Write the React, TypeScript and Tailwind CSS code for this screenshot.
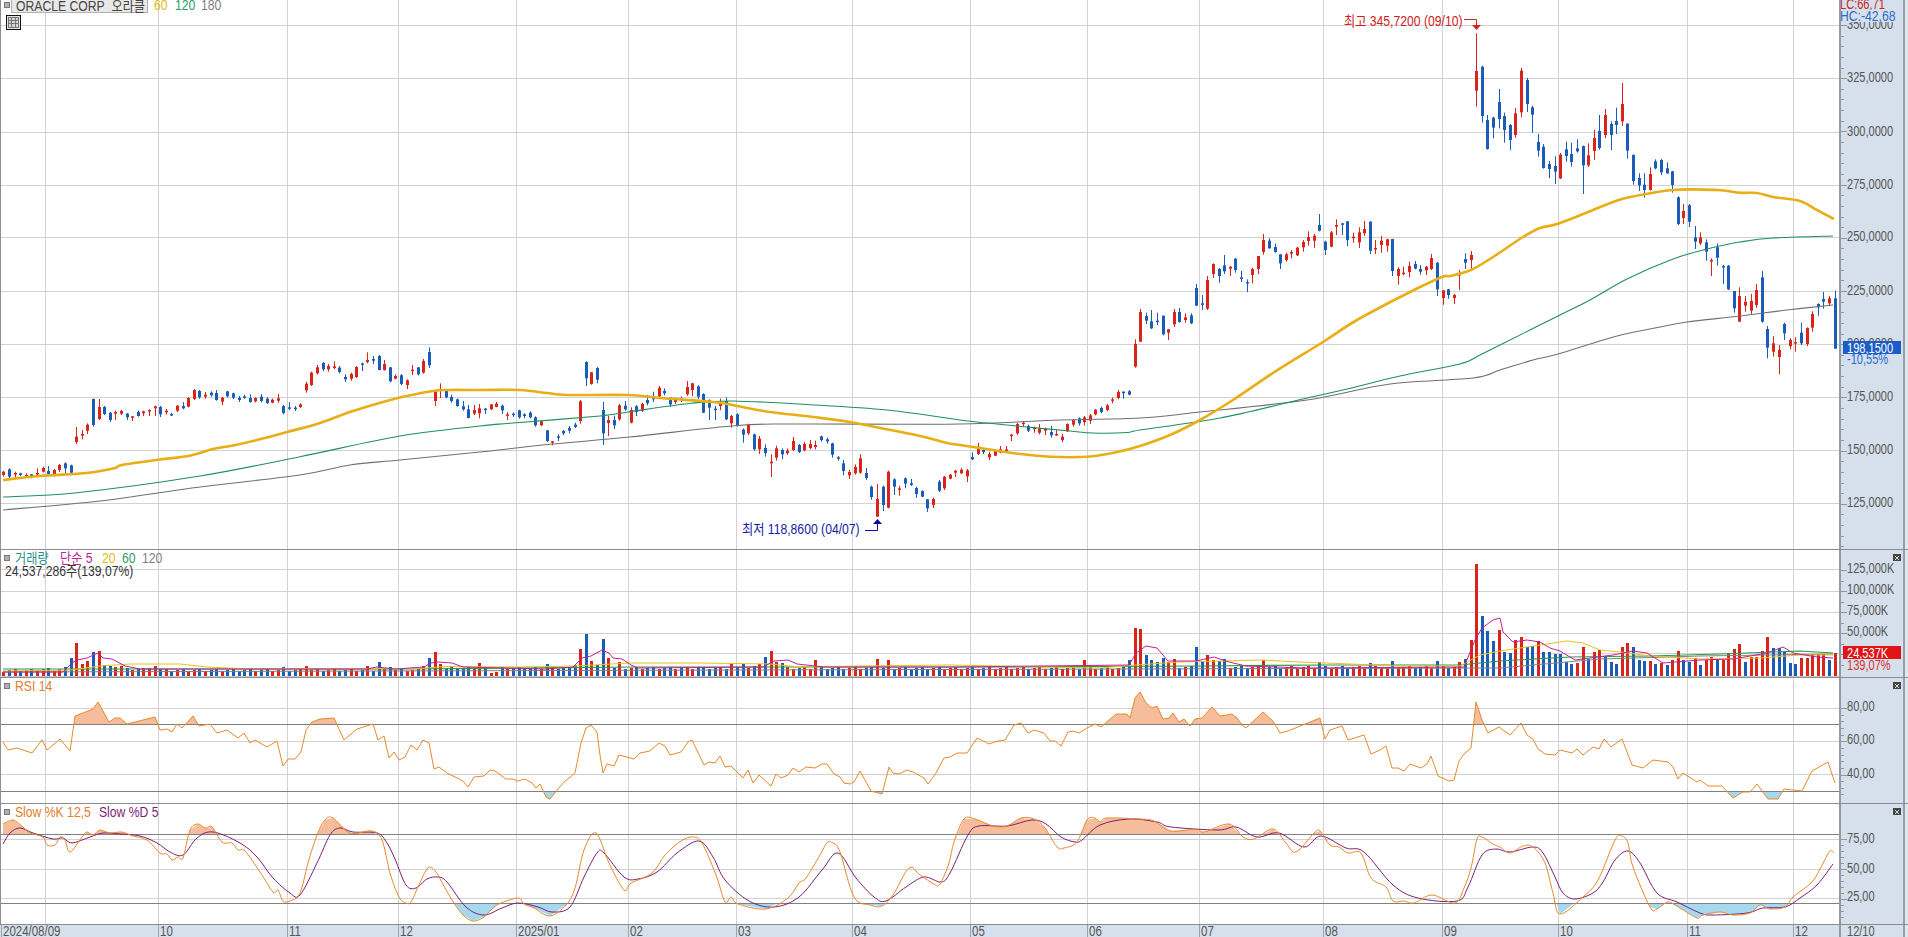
import React from "react";

const parseGroup = (y0: number, s: string) =>
  s.trim().split(/\s+/).map((t) => {
    const [h, a, b, l] = t.slice(1).split(",").map(Number);
    return { c: t[0], h: y0 + h / 3, t: y0 + a / 3, b: y0 + b / 3, l: y0 + l / 3 };
  });

const candles = [
  ...parseGroup(320, `r453,455,465,470 b445,448,470,474 r455,459,463,473 b458,460,465,468 r460,465,470,473 b462,463,471,475 r445,459,462,467 r440,444,455,458 b438,453,462,465 r447,450,468,470 r432,435,450,456 b427,430,445,460 b434,436,458,462 r321,350,366,372 r330,342,347,358 r310,314,332,342 b236,237,315,320 r237,261,297,300 b258,261,282,285 b276,278,300,306 r272,276,281,300 r270,273,281,285 b279,281,292,300 r288,289,291,303 b271,276,288,290 r272,274,280,288 r268,270,274,288 r257,259,265,288 b258,261,283,291 r267,272,277,284 b278,282,284,288 r255,257,272,276 b246,258,265,268 r231,234,260,262 r207,210,237,240 b210,213,232,236 r216,224,230,236 b214,218,226,230 b210,219,240,242 r231,233,245,255 b213,214,229,232 b218,220,233,237 b228,234,240,246 b224,229,233,237 b223,234,246,248 r232,234,244,247 b222,230,243,247 b232,236,249,252 r236,239,248,250 r222,235,242,248 b255,258,279,283 b246,262,264,270 b258,263,267,273 r250,253,261,264 r185,191,211,218 r155,158,195,198 r135,142,160,163 b126,129,148,153 r132,138,148,155 r124,139,144,148 b138,143,156,160 b163,171,178,186 r158,162,176,182 r138,141,171,174 b128,130,131,153 r97,120,126,130 b108,117,122,132 b105,108,150,151 r120,132,150,152 b141,142,184,187 r163,168,176,178 b162,166,192,196 r178,181,195,207 r135,149,151,165 b141,142,163,166 r117,123,158,161 b82,96,136,144 r212,214,243,258 r190,208,212,234 b209,212,232,235 b224,231,243,248 b236,238,258,260 b243,259,268,272 b255,268,294,295 r255,270,281,285 r252,265,280,295
  b264,266,270,282 r252,253,268,270 r246,251,261,262 b254,257,271,282 r277,283,287,300 b278,281,285,291 b269,271,292,296 b280,283,288,295 b274,278,292,295 b289,292,316,320 r302,304,316,318 b330,331,363,366 r363,364,368,376 b343,349,351,363 b330,333,340,345 b318,324,332,340 b308,314,321,324 r240,244,303,311 b124,126,175,198 r156,157,192,194 b141,144,179,190 b246,270,340,375 r288,300,309,348 b287,300,316,327 r252,256,298,302 b243,257,268,272 r262,270,308,310 b255,259,276,288 r248,252,272,276 b225,240,250,256 b215,231,238,246 r198,203,229,236 b205,213,220,226 b232,233,253,261 r233,236,246,252 b230,236,238,246 r183,201,223,227 r188,190,210,228 b196,199,230,237 b220,222,278,279 b238,241,263,300 b258,266,270,300 r236,248,258,270 b232,243,298,300 r285,288,310,323 b280,283,317,320 b325,329,344,368 r311,314,340,345 b341,343,388,392 r348,356,388,402 b373,384,399,410 r403,425,430,471 r377,385,413,422 b385,390,403,418 r385,392,400,404 r351,363,390,393 b372,375,396,399 r366,372,391,394 r360,372,384,388 r362,375,381,388 b347,349,360,365 b353,358,364,371 b368,370,404,413 b408,412,416,422 b420,430,453,466 r450,456,466,477 r433,441,460,464 r403,415,458,461 b444,459,474,480 b497,500,531,539 r492,537,590,590 b497,500,555,573 r452,455,563,565 b475,478,500,525 r498,505,507,527 b472,475,491,505 b477,490,495,498 b500,504,522,534 b511,513,530,532 b537,538,565,576 r533,537,555,564 b480,485,512,516 r468,470,505,510 r462,464,476,478 r450,452,458,471 r445,449,460,462 r447,451,469,486 b397,411,418,420 r369,380,402,405`),
  ...parseGroup(390, `b175,180,186,192 r185,192,202,210 r178,182,197,198 r168,178,188,190 r168,178,181,188 r132,134,138,153 r98,102,130,135 r93,98,102,110 b104,108,122,126 r110,113,116,128 r102,116,128,133 r113,116,122,135 b108,126,136,143 r120,132,136,138 r132,140,150,156 r100,102,124,126 r87,90,104,110 b82,85,100,107 r78,82,96,106 r72,76,92,102 r57,59,73,76 b50,54,66,70 r42,46,60,64 r22,28,30,40 r0,6,24,28 b4,5,5,26 b0,4,14,16`),
  ...parseGroup(200, `r418,432,500,503 r327,336,425,426 b338,348,362,372 b330,364,385,387 b338,362,364,375 b347,347,403,406 r387,388,398,420 r327,336,373,381 b324,336,366,368 r340,352,360,368 b340,346,370,372 b252,264,317,318 b285,310,314,330 r228,240,326,330 r190,192,222,234 b204,207,228,248 b165,196,214,222 r198,200,206,228 b174,176,210,218 b213,232,236,246 b238,246,248,276 r203,207,225,250 r168,168,207,222 r102,120,156,164 b115,122,145,146 b131,141,156,158 b162,163,190,207 r158,163,180,185 r150,156,161,175 r140,143,166,168 r120,126,142,155 r94,111,123,137 r102,107,122,144 b42,75,92,94 b122,125,150,165 r93,97,140,142 r58,75,80,105 b69,70,72,105 b63,64,120,138 r98,110,113,128 r82,97,127,144 r63,87,100,108 b64,65,152,162 r120,144,147,162 r108,122,135,158 r116,118,137,155 b117,117,213,228 r202,207,228,254 r200,218,222,226 r185,198,216,232 b183,192,206,208 b195,207,215,224 r198,200,211,225 r162,174,207,210 b186,188,268,288 r270,271,294,314 b267,268,285,296 r283,284,294,312 r210,222,224,270 b160,177,188,207 r153,165,180,212`),
  ...parseGroup(0, `r100,213,272,320 b197,200,348,368 b345,360,447,449 b350,353,383,415 b267,306,357,385 b338,348,390,428 b372,375,420,450 r324,340,405,413 r204,212,337,352 b234,240,312,336 b317,322,344,398 b402,426,452,470 b432,440,504,506 b483,492,507,534 b469,498,515,552 r459,464,535,537 b425,448,468,485 b428,462,486,500 b418,445,454,458 b437,438,496,582 r430,466,496,501 r390,414,453,480 b345,393,444,449 r327,345,405,414 b364,372,405,450 b323,363,375,402 r249,312,364,378 b370,371,452,476 b463,465,543,554 b520,534,556,573 b520,554,570,593 r502,522,570,572 b478,484,505,508 b477,480,517,525 b487,505,520,522 b513,514,555,578 b589,592,672,675 r612,633,654,672 b612,616,665,681 b678,712,725,747 r697,712,730,735 b718,727,755,782 r775,780,783,828 b730,742,773,797 b795,798,800,852`),
  ...parseGroup(270, `b-15,-13,58,60 b63,63,115,128 r52,78,155,155 r78,95,107,125 r72,93,122,133 r42,60,105,113 b3,22,155,158 b168,177,233,265 r198,220,245,260 r225,240,261,313 b158,162,190,210 r205,210,228,238 r202,216,220,245 b158,188,220,225 r172,174,222,228 r124,132,173,185 b100,102,112,137 b66,87,95,116 r78,85,100,107 b62,85,236,236`),
];

const cx = (i: number) => Math.round(3.4 + 5.6 * i);
const RED = "#d8241b";
const BLUE = "#1b5cb8";

const volOver: Record<number, number> = {
  0: 672, 7: 669, 8: 668, 10: 669, 11: 667, 12: 658, 13: 643, 14: 664, 15: 661, 16: 652, 17: 651, 18: 665, 19: 666, 20: 667, 21: 666, 22: 668, 23: 670, 24: 669, 25: 668, 26: 668, 27: 666, 28: 669, 50: 667, 54: 666, 65: 666, 67: 662, 69: 667,
  75: 666, 76: 658, 77: 652, 78: 664, 85: 663, 87: 673, 88: 672, 97: 664, 102: 665, 103: 649, 104: 634, 105: 661, 106: 665, 107: 639, 108: 658, 110: 662, 130: 664, 132: 664, 134: 666, 135: 664, 136: 657, 137: 651, 138: 662, 139: 663, 145: 660, 156: 659, 158: 660,
  193: 660, 201: 660, 202: 628, 203: 629, 204: 655, 205: 660, 206: 662, 207: 658, 208: 662, 209: 659, 213: 647, 214: 661, 215: 655, 216: 660, 217: 661, 218: 659, 225: 660, 235: 662, 244: 663, 248: 661, 256: 661, 260: 662, 261: 659, 262: 640, 263: 564, 264: 616, 265: 631, 266: 641,
  267: 630, 268: 652, 269: 653, 270: 640, 271: 637, 272: 647, 273: 646, 274: 641, 275: 652, 276: 652, 277: 654, 278: 654, 279: 662, 280: 664, 281: 663, 282: 647, 283: 659, 284: 652, 285: 650, 286: 657, 287: 662, 288: 664, 289: 647, 290: 643, 291: 647, 292: 660, 293: 661, 294: 661, 295: 664, 296: 663, 297: 665, 298: 660, 299: 651, 300: 660, 301: 662, 302: 658, 303: 665, 304: 660, 305: 657, 306: 660, 307: 660, 308: 653, 309: 649, 310: 644, 311: 662, 312: 657, 313: 657, 314: 651, 315: 637, 316: 648, 317: 648, 318: 652, 319: 663, 320: 664, 321: 658, 322: 658, 323: 654, 324: 654, 325: 654, 326: 660, 327: 653,
};
const volColors = "rbbrrbbrbbbbbbrrbrrbbbrrbbbrbrbrrbbrbrrbrrrrbrrrrbbbbbrrrrrbr";

const gold = "3,480 40,476 87,473 115,468 122,465 160,459.5 188,456 213,449 233,445.5 257,440 287,432 317,424 353,411 400,397.5 433,391 447,390 480,390 520,390 547,393 567,395 628,395 660,398 713,402 737,406 770,412 813,417 850,422 880,428 920,436 947,443 960,445 993,450 1017,453.7 1050,456.7 1087,456.7 1117,452 1140,446 1170,435 1200,420 1233,400 1273,373 1323,342 1357,320 1410,292 1442,277 1450,276 1471,270 1493,257 1523,237 1540,228 1557,224 1593,210 1613,202 1630,197 1673,190 1717,190 1740,192.7 1757,193 1773,197 1800,201 1817,210 1834,219";
const green = "3,497 77,492.7 200,476 300,456.7 400,436 480,426 513,423 600,416 628,412 693,403 733,401 807,404.5 887,410 960,420 987,423 1027,427 1070,431 1093,433 1127,432.5 1140,430 1220,418 1307,398 1347,389 1400,376 1460,364 1480,355 1500,345 1558,316 1590,300 1627,279 1673,259 1707,249 1740,242 1773,238 1833,236";
const gray = "3,510 100,501 200,487 300,475 350,465 400,460 480,452 553,444 630,437 737,425.5 800,424 960,424 1060,420 1140,418 1200,412 1307,400 1390,384 1473,378 1500,370 1533,360 1558,354 1617,336 1660,327 1687,322 1740,316 1787,310 1833,305";

const volPink = "3,672 63,672 72,663 77,660 87,658 98,653 103,658 112,659 125,666 140,669 367,669 377,667 395,669 424,667 431,663 438,662 452,663 463,667 545,669 573,667 582,658 591,656 602,650 609,653 613,658 622,659 631,665 638,668 763,667 774,661 788,660 797,664 824,667 955,667 1129,665 1136,653 1146,646 1157,648 1168,661 1196,661 1214,657 1229,662 1246,666 1307,668 1464,667 1475,640 1482,628 1493,620 1500,618 1503,632 1513,642 1527,640 1540,642 1550,648 1560,651 1575,660 1597,657 1613,655 1633,651 1647,653 1663,663 1675,662 1700,660 1733,659 1767,653 1783,647 1793,653 1817,657 1833,658";
const volGold = "3,671 70,670 100,666 130,664 180,664 207,667 240,668.5 420,668.5 445,666.5 520,667 575,666 630,663 700,663 770,664 800,667 860,666 950,665 1100,668 1135,665 1180,662 1260,660 1300,662 1400,666 1460,666 1480,655 1500,651 1560,642 1567,641 1583,643 1600,650 1620,652 1650,656 1700,659 1760,658 1800,655 1833,655";
const volGreen = "3,669 400,669 640,667 1000,667 1200,666 1330,665 1460,665 1500,661 1570,657 1650,656 1720,654 1800,651 1833,653";
const volGray = "3,672 1500,668 1600,659 1700,656 1833,654";

const rsi = "3,742 8,750 17,748 32,753 42,740 47,750 60,739 70,751 75,716 83,713 93,709 98,702 109,722 115,718 120,718 127,724 155,717 160,730 167,729 172,732 177,724 182,728 193,716 199,726 210,724 217,733 227,730 238,738 244,733 250,743 255,740 267,747 277,741 283,766 288,759 295,759 301,752 306,730 312,722 320,719 334,718 344,740 357,729 373,724 378,740 384,736 389,758 394,752 399,760 405,757 411,745 417,750 423,740 429,743 434,769 439,767 447,773 463,781 468,787 474,777 484,776 490,770 495,771 506,779 513,779 518,781 525,779 532,783 536,788 540,784 546,797 550,799 563,783 575,773 581,743 586,728 591,725 597,732 600,755 603,773 607,764 614,766 619,755 634,759 640,753 650,751 659,743 665,746 670,755 681,752 688,742 692,740 704,765 709,762 715,763 720,756 725,767 731,766 743,778 748,770 753,783 759,775 771,786 776,774 781,778 788,775 793,768 799,772 806,767 815,768 822,764 827,764 834,774 840,777 844,783 850,784 854,782 860,771 871,791 882,794 889,767 893,773 899,774 907,770 913,772 924,778 928,784 936,773 944,758 950,757 957,753 967,753 977,738 989,744 998,741 1005,740 1014,725 1021,723 1028,733 1034,730 1044,733 1050,741 1055,741 1061,746 1068,732 1073,731 1079,733 1087,728 1095,724 1101,727 1116,714 1127,714 1130,718 1135,698 1140,692 1146,703 1152,708 1157,706 1163,719 1169,718 1173,713 1179,722 1184,719 1190,726 1195,719 1202,718 1212,707 1220,716 1227,715 1232,714 1237,718 1243,726 1246,728 1263,712 1273,721 1280,733 1288,731 1320,718 1325,739 1330,730 1342,726 1348,740 1364,735 1371,754 1380,750 1386,746 1392,768 1398,768 1404,771 1410,764 1421,768 1427,764 1431,756 1438,776 1449,781 1454,780 1459,761 1464,754 1471,748 1473,730 1476,702 1482,720 1488,733 1499,727 1510,735 1521,723 1527,735 1533,739 1538,749 1545,754 1555,755 1560,750 1572,753 1577,749 1583,755 1593,747 1599,749 1604,739 1611,747 1622,739 1632,765 1643,768 1653,760 1668,762 1673,767 1678,779 1683,773 1697,782 1700,780 1708,786 1722,786 1733,798 1743,792 1750,792 1757,784 1768,799 1778,799 1784,789 1802,791 1812,771 1828,762 1835,783";

const stochK = "3,824 13,820 23,827 30,833 43,837 47,845 55,845 60,837 65,840 70,852 82,837 87,832 93,835 100,830 110,833 122,832 133,836 147,840 160,853 167,854 172,860 178,857 183,858 190,830 198,824 205,828 212,827 222,842 232,843 238,850 245,851 260,872 273,892 278,890 283,901 290,901 300,893 308,863 317,835 325,820 333,818 350,833 372,831 382,840 390,873 399,897 406,903 411,902 418,887 428,868 436,872 445,888 454,903 463,915 473,921 484,917 497,905 518,898 524,904 534,908 550,916 566,905 575,888 584,850 596,833 609,863 624,890 631,883 652,873 665,855 681,841 693,837 702,843 716,875 725,902 731,897 738,904 766,909 788,898 799,883 806,878 820,855 827,843 833,843 840,852 854,897 870,905 882,906 893,895 909,868 920,875 934,884 940,884 949,863 954,842 964,819 975,819 993,826 1007,826 1021,818 1034,819 1045,828 1057,847 1064,848 1077,842 1087,820 1095,818 1100,822 1107,818 1139,819 1154,821 1171,831 1196,829 1204,832 1229,824 1243,837 1254,839 1273,829 1286,843 1296,852 1314,833 1320,831 1330,845 1339,847 1348,853 1361,853 1371,878 1386,887 1393,901 1404,901 1414,903 1432,895 1455,903 1464,888 1471,868 1477,839 1482,837 1493,844 1500,847 1510,853 1523,846 1533,847 1545,863 1553,893 1560,914 1583,897 1598,880 1615,840 1622,836 1628,843 1633,867 1650,907 1657,909 1668,902 1680,908 1697,918 1703,915 1720,912 1733,915 1750,913 1760,905 1770,909 1785,907 1793,897 1812,882 1822,865 1830,851 1834,853";
const stochD = "3,844 10,833 20,828 33,833 53,839 63,838 72,843 90,837 103,833 120,834 140,836 157,843 170,852 183,855 197,838 213,832 240,843 257,857 273,878 290,893 300,895 317,863 330,835 340,828 353,832 377,833 387,843 395,859 406,885 416,888 427,879 438,877 447,882 466,907 484,915 502,908 518,903 538,907 552,912 570,907 584,877 597,853 604,853 624,877 638,879 657,872 677,853 699,841 713,857 725,880 749,901 774,907 799,897 822,870 838,853 856,878 874,897 886,901 906,887 924,877 941,882 950,873 968,835 979,826 1007,826 1032,820 1046,824 1061,837 1075,842 1082,840 1100,825 1129,819 1157,822 1171,827 1218,830 1236,827 1257,837 1279,833 1304,847 1321,836 1346,848 1364,852 1393,885 1418,898 1457,901 1468,887 1482,855 1496,849 1510,852 1533,847 1543,853 1555,877 1563,893 1575,899 1593,893 1603,882 1615,860 1628,851 1640,863 1657,893 1677,902 1700,913 1713,915 1747,913 1763,908 1785,907 1800,898 1817,885 1833,864";

const vGrid = [45, 158, 287, 398, 516, 628, 736, 852, 970, 1087, 1199, 1323, 1442, 1558, 1687, 1793];

const fillPath = (pts: string, thr: number) => {
  const p = pts.split(" ");
  const first = p[0].split(",")[0];
  const last = p[p.length - 1].split(",")[0];
  return `M${first},${thr} L${p.join(" L")} L${last},${thr} Z`;
};

const smooth = (pts: string) => {
  const p = pts.split(" ").map((s) => s.split(",").map(Number));
  let d = `M${p[0][0]},${p[0][1]}`;
  for (let i = 0; i < p.length - 1; i++) {
    const a = p[Math.max(i - 1, 0)];
    const b = p[i];
    const c = p[i + 1];
    const e = p[Math.min(i + 2, p.length - 1)];
    const c1x = b[0] + (c[0] - a[0]) / 6;
    const c1y = b[1] + (c[1] - a[1]) / 6;
    const c2x = c[0] - (e[0] - b[0]) / 6;
    const c2y = c[1] - (e[1] - b[1]) / 6;
    d += ` C${c1x.toFixed(1)},${c1y.toFixed(1)} ${c2x.toFixed(1)},${c2y.toFixed(1)} ${c[0]},${c[1]}`;
  }
  return d;
};

type Label = { x: number; y: number; text: string; cls: string };

const base = "block origin-left whitespace-nowrap text-[14px] leading-[12px]";
const narrow = `${base} scale-x-[0.79]`;
const wide = `${base} scale-x-[0.87]`;
const dateText = `${base} scale-x-[0.82]`;

function PlacedText({ label, top, style }: { label: Label; top: number; style: string }) {
  return (
    <span className={`absolute ${style} ${label.cls}`} style={{ left: label.x, top: label.y - top - 6 }}>
      {label.text}
    </span>
  );
}

function ticks(start: number, step: number, count: number, every: number) {
  const out: { y: number; len: number }[] = [];
  for (let i = 0; i < count; i++) {
    out.push({ y: start + step * i, len: i % every === 0 ? 6 : 3 });
  }
  return out;
}

type PanelProps = {
  top: number;
  height: number;
  light: number[];
  dark?: number[];
  labels?: Label[];
  axis: Label[];
  axisTicks: { y: number; len: number }[];
  close?: boolean;
  overlay?: React.ReactNode;
  axisOverlay?: React.ReactNode;
  children: React.ReactNode;
};

function Panel({ top, height, light, dark = [], labels = [], axis, axisTicks, close, overlay, axisOverlay, children }: PanelProps) {
  const inner = top > 0 ? top + 1 : top;
  const h = top > 0 ? height - 1 : height;
  return (
    <div className={`flex shrink-0 ${top > 0 ? "border-t border-[#8c8c8c]" : ""}`} style={{ height }}>
      <div className="relative w-[1839px] shrink-0 overflow-hidden bg-white">
        <svg width={1839} height={h} viewBox={`0 ${inner} 1839 ${h}`} className="block">
          {light.map((y) => (
            <rect key={y} x={0} y={Math.round(y)} width={1839} height={1} fill="#d2d2d2" />
          ))}
          {vGrid.map((x) => (
            <rect key={x} x={x} y={inner} width={1} height={h} fill="#d2d2d2" />
          ))}
          {dark.map((y) => (
            <rect key={y} x={0} y={y} width={1839} height={1} fill="#808080" />
          ))}
          <rect x={0} y={inner} width={1} height={h} fill="#8f8f8f" />
          {children}
        </svg>
        {labels.map((l) => (
          <PlacedText key={l.text + l.x} label={l} top={inner} style={wide} />
        ))}
        {overlay}
      </div>
      <div className="relative w-[64px] shrink-0 overflow-hidden border-l-2 border-[#919ba6] bg-[#d5e0ec]">
        <svg width={8} height={h} viewBox={`0 ${inner} 8 ${h}`} className="absolute left-0 top-0">
          {axisTicks.map((t) => (
            <rect key={t.y} x={0} y={Math.round(t.y)} width={t.len} height={1} fill="#8d97a3" />
          ))}
        </svg>
        {axis.map((l) => (
          <PlacedText key={l.text} label={{ ...l, x: l.x - 1841 }} top={inner} style={narrow} />
        ))}
        {axisOverlay}
        {close && (
          <span className="absolute right-[2px] top-[4px] flex h-[7px] w-[8px] items-center justify-center bg-[#454545]">
            <svg width={4} height={4} viewBox="0 0 4 4">
              <path d="M0 0L4 4M4 0L0 4" stroke="#fff" strokeWidth={0.8} />
            </svg>
          </span>
        )}
      </div>
      <div className="flex-1 border-l-2 border-[#979ea6] bg-[#dfe7ef]" />
    </div>
  );
}

const Dot = ({ x, y }: { x: number; y: number }) => (
  <span className="absolute h-[6px] w-[6px] border border-[#777] bg-[#b0b0b0]" style={{ left: x, top: y }} />
);

const ax = "text-[#555]";

const mainAxis: Label[] = [
  { x: 1847, y: 24, text: "350,0000", cls: ax },
  { x: 1847, y: 77, text: "325,0000", cls: ax },
  { x: 1847, y: 131, text: "300,0000", cls: ax },
  { x: 1847, y: 184, text: "275,0000", cls: ax },
  { x: 1847, y: 236, text: "250,0000", cls: ax },
  { x: 1847, y: 290, text: "225,0000", cls: ax },
  { x: 1847, y: 343, text: "200,0000", cls: ax },
  { x: 1847, y: 396, text: "175,0000", cls: ax },
  { x: 1847, y: 449, text: "150,0000", cls: ax },
  { x: 1847, y: 502, text: "125,0000", cls: ax },
];

const months: [number, string][] = [
  [1, "2024/08/09"], [158, "10"], [287, "11"], [398, "12"], [516, "2025/01"], [628, "02"], [736, "03"], [852, "04"],
  [970, "05"], [1087, "06"], [1199, "07"], [1323, "08"], [1442, "09"], [1558, "10"], [1687, "11"], [1793, "12"],
];

export default function App() {
  return (
    <div className="flex h-[937px] w-[1908px] flex-col overflow-hidden bg-white font-['Liberation_Sans','Noto_Sans_CJK_KR',sans-serif]">
      <Panel
        top={0}
        height={549}
        light={[25, 78, 132, 185, 237, 291, 344, 397, 450, 503]}
        axis={mainAxis}
        axisTicks={ticks(25, 10.64, 50, 5)}
        labels={[
          { x: 1344, y: 21, text: "최고 345,7200 (09/10)", cls: "text-[#d02020]" },
          { x: 742, y: 529, text: "최저 118,8600 (04/07)", cls: "text-[#1a1aa8]" },
          { x: 154, y: 5, text: "60", cls: "text-[#e8b820]" },
          { x: 175, y: 5, text: "120", cls: "text-[#2e9e6b]" },
          { x: 201, y: 5, text: "180", cls: "text-[#808080]" },
        ]}
        axisOverlay={
          <>
            <span className={`absolute left-[-1px] top-[-2px] ${narrow} text-[#d02020]`}>LC:66,71</span>
            <div className="absolute left-[-1px] top-[10px] h-[12px] w-[60px] bg-[#d5e0ec]">
              <span className={`${wide} text-[#2a6cc8]`}>HC:-42,68</span>
            </div>
            <div className="absolute left-[2px] top-[341px] h-[13px] w-[58px] bg-[#1a5cc8] pl-[4px] pt-[1px] text-white">
              <span className={narrow}>198,1500</span>
            </div>
            <span className={`absolute left-[6px] top-[353px] ${narrow} text-[#2a6cd0]`}>-10,55%</span>
          </>
        }
        overlay={
          <>
            <Dot x={4} y={2} />
            <div className="absolute left-[11px] top-[-2px] flex h-[15px] w-[137px] items-center border border-[#b0b0b0] bg-[#e8e8e8] pl-[4px] text-[#444]">
              <span className={wide}>ORACLE CORP&nbsp;&nbsp;오라클</span>
            </div>
            <svg width={15} height={15} viewBox="0 0 15 15" className="absolute left-[6px] top-[15px]">
              <rect x={0.5} y={0.5} width={14} height={14} fill="#e4e4e4" stroke="#111" />
              <rect x={2.5} y={2.5} width={10} height={10} fill="#d4d4d4" stroke="#777" />
              <path d="M2.5 5.5H12.5M2.5 8.5H12.5M5.5 2.5V12.5M9.5 2.5V12.5" stroke="#777" />
            </svg>
          </>
        }
      >
        {candles.map((c, i) => {
          const x = cx(i);
          const col = c.c === "r" ? RED : BLUE;
          return (
            <g key={i} fill={col}>
              <rect x={x} y={c.h} width={1} height={Math.max(c.l - c.h, 1)} />
              <rect x={x - 1} y={c.t} width={3} height={Math.max(c.b - c.t, 1.5)} />
            </g>
          );
        })}
        <path d={smooth(gray)} fill="none" stroke="#707070" strokeWidth={1.1} />
        <path d={smooth(green)} fill="none" stroke="#1f8f5c" strokeWidth={1.1} />
        <path d={smooth(gold)} fill="none" stroke="#e8ae16" strokeWidth={2.6} />
        <path d="M1464 19.5H1476.5V25" fill="none" stroke={RED} />
        <path d="M1472 25H1481L1476.5 30Z" fill={RED} />
        <path d="M865 530.5H877.5V524" fill="none" stroke="#1400b0" />
        <path d="M873 524H882L877.5 519Z" fill="#1400b0" />
      </Panel>

      <Panel
        top={549}
        height={128}
        light={[569, 591, 612, 633, 653]}
        close
        axisTicks={[...ticks(570, 10.5, 10, 2)]}
        axis={[
          { x: 1847, y: 568, text: "125,000K", cls: ax },
          { x: 1847, y: 589, text: "100,000K", cls: ax },
          { x: 1847, y: 610, text: "75,000K", cls: ax },
          { x: 1847, y: 631, text: "50,000K", cls: ax },
          { x: 1847, y: 665, text: "139,07%", cls: "text-[#d83030]" },
        ]}
        axisOverlay={
          <div className="absolute left-[2px] top-[96px] h-[13px] w-[58px] bg-[#e01414] pl-[4px] pt-[1px] text-white">
            <span className={narrow}>24,537K</span>
          </div>
        }
        labels={[
          { x: 15, y: 558, text: "거래량", cls: "text-[#2e8f8f]" },
          { x: 60, y: 558, text: "단순 5", cls: "text-[#c0209a]" },
          { x: 102, y: 558, text: "20", cls: "text-[#e0c020]" },
          { x: 122, y: 558, text: "60", cls: "text-[#2e9e6b]" },
          { x: 142, y: 558, text: "120", cls: "text-[#808080]" },
          { x: 5, y: 571, text: "24,537,286주(139,07%)", cls: "text-[#333]" },
        ]}
        overlay={<Dot x={4} y={5} />}
      >
        {candles.map((c, i) => {
          const top = volOver[i] ?? (i < 75 ? 671 : i < 200 ? 669 : 668) - ((i * 7) % 3);
          const colour = i >= 267 ? volColors[i - 267] : c.c;
          return <rect key={i} x={cx(i) - 1} y={top} width={3} height={676 - top} fill={colour === "r" ? RED : BLUE} />;
        })}
        <rect x={0} y={676} width={1839} height={1} fill="#c8c8c8" />
        <polyline points={volGray} fill="none" stroke="#808080" />
        <polyline points={volGreen} fill="none" stroke="#2d9a4a" strokeWidth={1.2} />
        <polyline points={volGold} fill="none" stroke="#e8c21a" />
        <polyline points={volPink} fill="none" stroke="#c0209a" />
      </Panel>

      <Panel
        top={677}
        height={126}
        light={[708, 741, 774]}
        dark={[724, 791]}
        close
        axisTicks={ticks(708, 6.65, 14, 5)}
        axis={[
          { x: 1847, y: 706, text: "80,00", cls: ax },
          { x: 1847, y: 739, text: "60,00", cls: ax },
          { x: 1847, y: 773, text: "40,00", cls: ax },
        ]}
        labels={[{ x: 15, y: 686, text: "RSI 14", cls: "text-[#e0802a]" }]}
        overlay={<Dot x={4} y={5} />}
      >
        <clipPath id="rsiUp"><rect x={0} y={678} width={1839} height={46} /></clipPath>
        <clipPath id="rsiDown"><rect x={0} y={792} width={1839} height={11} /></clipPath>
        <path d={fillPath(rsi, 724)} fill="#f6bd9c" clipPath="url(#rsiUp)" />
        <path d={fillPath(rsi, 791)} fill="#a6d8ee" clipPath="url(#rsiDown)" />
        <polyline points={rsi} fill="none" stroke="#e8892b" />
      </Panel>

      <Panel
        top={803}
        height={121}
        light={[839, 869, 898]}
        dark={[834, 903]}
        close
        axisTicks={ticks(839, 6, 14, 5)}
        axis={[
          { x: 1847, y: 838, text: "75,00", cls: ax },
          { x: 1847, y: 868, text: "50,00", cls: ax },
          { x: 1847, y: 896, text: "25,00", cls: ax },
        ]}
        labels={[
          { x: 15, y: 812, text: "Slow %K 12,5", cls: "text-[#e0802a]" },
          { x: 99, y: 812, text: "Slow %D 5", cls: "text-[#7b1f7b]" },
        ]}
        overlay={<Dot x={4} y={5} />}
      >
        <clipPath id="stUp"><rect x={0} y={804} width={1839} height={30} /></clipPath>
        <clipPath id="stDown"><rect x={0} y={904} width={1839} height={20} /></clipPath>
        <path d={fillPath(stochK, 834)} fill="#f6bd9c" clipPath="url(#stUp)" />
        <path d={fillPath(stochK, 903)} fill="#a6d8ee" clipPath="url(#stDown)" />
        <path d={smooth(stochD)} fill="none" stroke="#7b1f7b" />
        <path d={smooth(stochK)} fill="none" stroke="#e8892b" />
      </Panel>

      <div className="flex h-[13px] shrink-0 border-t border-[#8c8c8c] bg-[#d5e0ec]">
        <div className="relative w-[1839px] shrink-0 overflow-hidden">
          {months.map(([x, t]) => (
            <div key={t + x} className="absolute top-0 h-full border-l border-[#9aa3ad] pl-[1px] text-[#555]" style={{ left: x }}>
              <span className={dateText}>{t}</span>
            </div>
          ))}
        </div>
        <div className="w-[64px] shrink-0 overflow-hidden border-l-2 border-[#919ba6] pl-[6px] text-[#555]">
          <span className={narrow}>12/10</span>
        </div>
        <div className="flex-1 border-l-2 border-[#979ea6] bg-[#dfe7ef]" />
      </div>
    </div>
  );
}
